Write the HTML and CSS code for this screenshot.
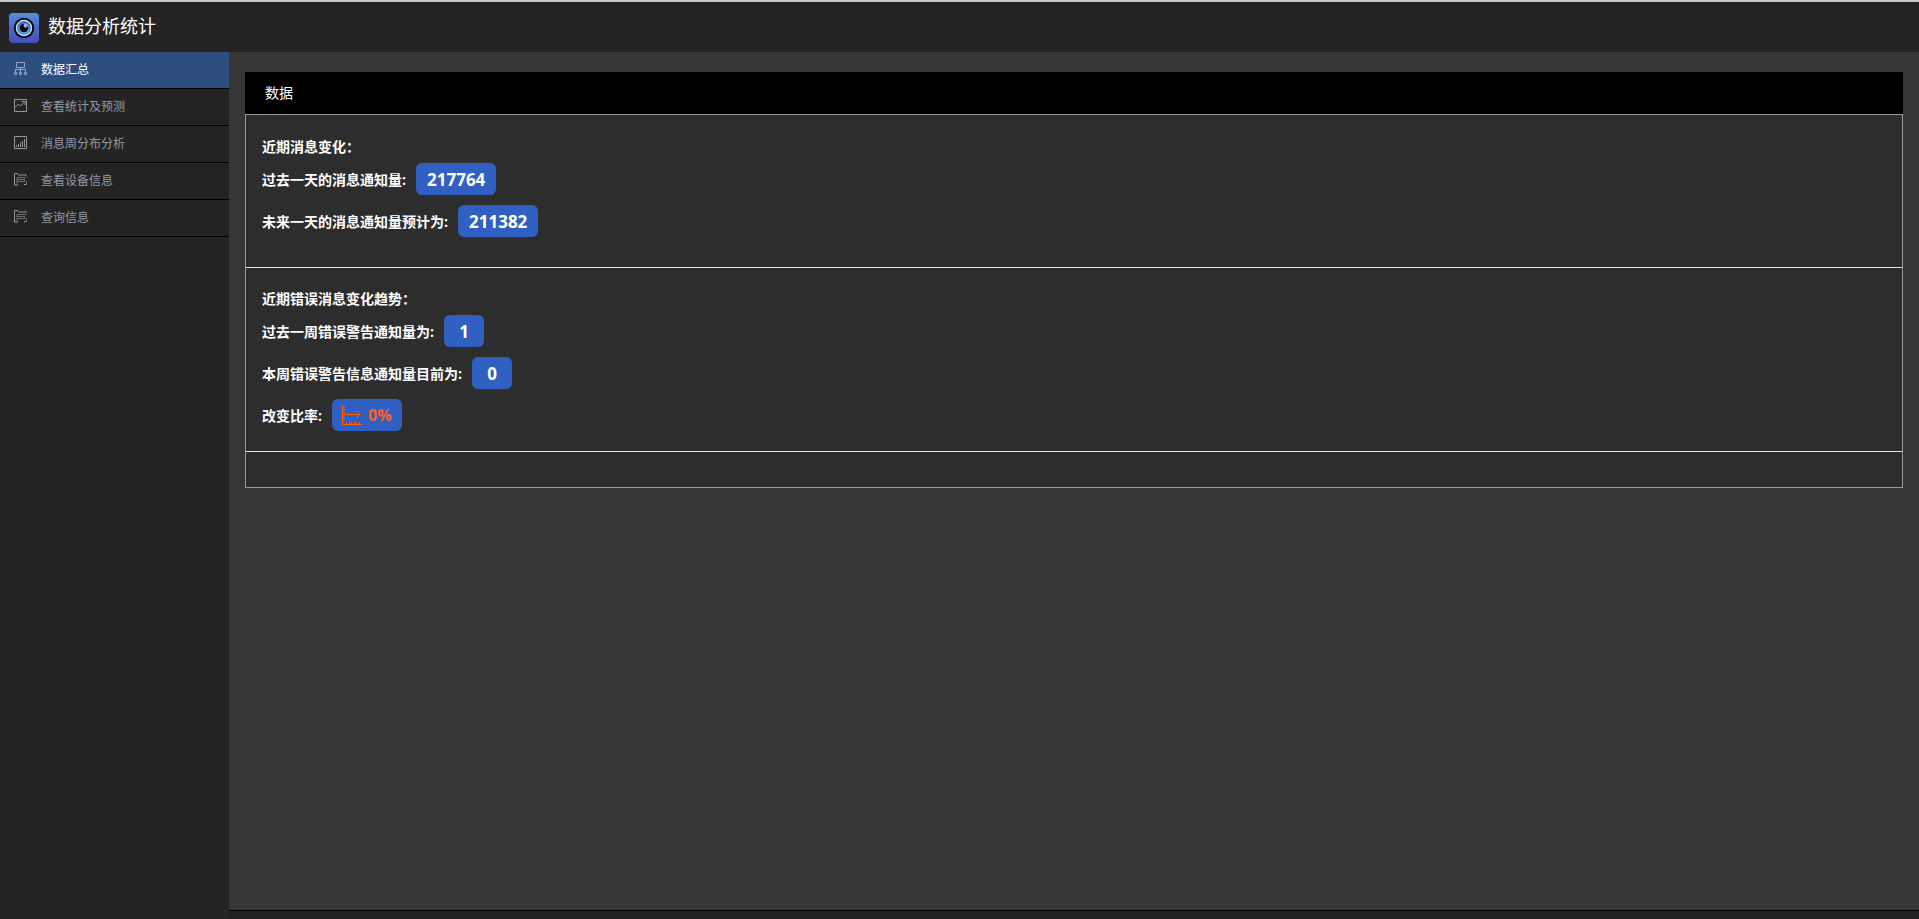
FILE: index.html
```html
<!DOCTYPE html>
<html lang="zh-CN">
<head>
<meta charset="utf-8">
<title>数据分析统计</title>
<link rel="stylesheet" href="styles.css">
</head>
<body>
<header class="topbar">
  <svg class="logo" viewBox="0 0 30 30" aria-hidden="true">
    <defs>
      <linearGradient id="tile" x1="0" y1="0" x2="0" y2="1"><stop offset="0" stop-color="#5a8ed8"/><stop offset=".5" stop-color="#4a68c8"/><stop offset="1" stop-color="#454fb8"/></linearGradient>
      <radialGradient id="iris" cx=".5" cy=".75" r=".7"><stop offset="0" stop-color="#68aef0"/><stop offset="1" stop-color="#3568c4"/></radialGradient>
    </defs>
    <rect width="30" height="30" rx="4" fill="url(#tile)"/>
    <circle cx="15" cy="15" r="10.2" fill="#05070c"/>
    <circle cx="15" cy="15" r="7.6" fill="url(#iris)" stroke="#dce9f8" stroke-width="1.3"/>
    <circle cx="15" cy="15" r="4.2" fill="#060a14"/>
    <circle cx="16.6" cy="12.6" r="2.1" fill="#a9b2bd"/>
  </svg>
  <h1 class="title">数据分析统计</h1>
</header>
<div class="layout">
  <nav class="sidebar">
    <a class="item active" href="#summary">
      <svg class="icon" viewBox="0 0 13 13" aria-hidden="true"><path d="M2.5.5h8v5h-8zM6.5 5.500v5M1 7.500h11M1.500 7.500v3M11.500 7.500v3M.5 10.500h2v2h-2zM5.500 10.500h2v2h-2zM10.500 10.500h2v2h-2z"/></svg>
      数据汇总</a>
    <a class="item" href="#forecast">
      <svg class="icon" viewBox="0 0 13 13" aria-hidden="true"><path d="M.5.5h12v12H.5zM1 8.500l3.500-3.500 2 2 4-4M7.500 2.500h3.500V6"/></svg>
      查看统计及预测</a>
    <a class="item" href="#weekly">
      <svg class="icon" viewBox="0 0 13 13" aria-hidden="true"><path d="M.5.5h12v12H.5z"/><path d="M2.500 9v2M4.500 8v3M6.500 6.500V11M8.500 5v6M10.500 3v8"/></svg>
      消息周分布分析</a>
    <a class="item" href="#devices">
      <svg class="icon" viewBox="0 0 13 13" aria-hidden="true"><path d="M4 12H.5V.5h3l1 1.500h8.500M10 11.500h3"/><path class="soft" d="M3 12V4.500h9.500M3 6.500h7M3 8.500h8M10.500 6v3M12.500 8v4"/></svg>
      查看设备信息</a>
    <a class="item" href="#query">
      <svg class="icon" viewBox="0 0 13 13" aria-hidden="true"><path d="M4 12H.5V.5h3l1 1.500h8.500M10 11.500h3"/><path class="soft" d="M3 12V4.500h9.500M3 6.500h7M3 8.500h8M10.500 6v3M12.500 8v4"/></svg>
      查询信息</a>
  </nav>
  <main class="content">
    <section class="panel">
      <h2 class="panel-head">数据</h2>
      <div class="panel-body">
        <section class="group recent">
          <h3 class="line">近期消息变化：</h3>
          <p class="row">过去一天的消息通知量:<span class="badge">217764</span></p>
          <p class="row">未来一天的消息通知量预计为:<span class="badge">211382</span></p>
        </section>
        <section class="group errors">
          <h3 class="line">近期错误消息变化趋势：</h3>
          <p class="row">过去一周错误警告通知量为:<span class="badge">1</span></p>
          <p class="row">本周错误警告信息通知量目前为:<span class="badge">0</span></p>
          <p class="row">改变比率:<span class="badge rate">
            <svg class="trend" viewBox="0 0 20 20" aria-hidden="true"><path d="M.5 0v19.500H20M4 9.500h14M14.500 6l3.500 3.500-3.500 3.500"/><path d="M1 2.500h2M1 4.500h2M1 7.500h2M1 9.500h2M1 12.500h2M1 14.500h2M4.500 17v2M7.500 17v2M9.500 17v2M12.500 17v2M14.500 17v2M17.500 17v2"/></svg>0%</span></p>
        </section>
        <div class="blank"></div>
      </div>
    </section>
  </main>
</div>
</body>
</html>
```
FILE: styles.css
```css
* { box-sizing: border-box; margin: 0; }

body {
  display: flex;
  flex-direction: column;
  min-height: 100vh;
  background: #222;
  color: #fff;
  font-family: "Open Sans", "Noto Sans CJK SC", sans-serif;
  font-size: 14px;
}

.topbar {
  display: flex;
  align-items: center;
  gap: 9px;
  height: 52px;
  padding: 2px 9px 0;
  border-top: 2px solid #c4c6c6;
  background: #242424;
}

.logo { width: 30px; height: 30px; }

.title {
  font-size: 18px;
  font-weight: 400;
  line-height: 24px;
  padding-bottom: 4px;
}

.layout { display: flex; flex: 1; }

.sidebar { flex: 0 0 229px; background: #242424; }

.item {
  display: flex;
  align-items: center;
  gap: 14px;
  height: 37px;
  padding: 0 14px 3px;
  border-bottom: 1px solid #000;
  color: #939aa6;
  font-size: 12px;
  text-decoration: none;
}

.item.active { background: #2d4f80; color: #fff; }

.icon {
  width: 13px;
  height: 13px;
  fill: none;
  stroke: #989898;
}

.icon .soft { stroke: #6c6c6c; }

.active .icon { stroke: #94a8c6; }

.content {
  flex: 1;
  margin-bottom: 8px;
  padding: 20px 16px;
  border-bottom: 1px solid #000;
  background: #363636;
}

.panel-head {
  padding: 0 20px;
  background: #000;
  font-size: 14px;
  font-weight: 400;
  line-height: 42px;
}

.panel-body { border: 1px solid #999; background: #2d2d2d; }

.group {
  padding: 15px 16px 20px;
  border-bottom: 1px solid #e6e6e6;
}

.recent { padding: 16px 16px 30px; }

.line { font-size: 14px; font-weight: 700; line-height: 32px; }

.row {
  display: flex;
  align-items: center;
  gap: 10px;
  height: 32px;
  font-weight: 700;
}

.row + .row { margin-top: 10px; }

.badge {
  display: flex;
  align-items: center;
  justify-content: center;
  gap: 6px;
  min-width: 40px;
  height: 32px;
  padding: 0 11px;
  border-radius: 6px;
  background: #2f60c2;
  font-size: 17px;
}

.rate { padding: 0 10px; color: #ff5f1f; font-size: 16px; }

.trend { width: 20px; height: 20px; fill: none; stroke: #ff5f00; }

.blank { height: 35px; }
```
